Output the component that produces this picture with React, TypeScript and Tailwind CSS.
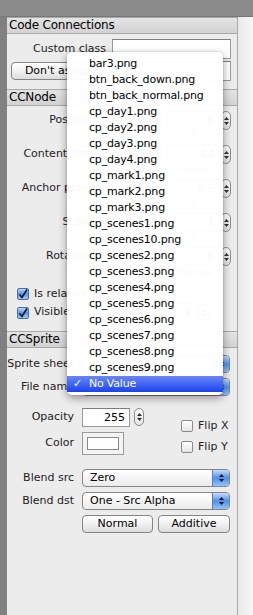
import React from "react";

const items = [
  "bar3.png",
  "btn_back_down.png",
  "btn_back_normal.png",
  "cp_day1.png",
  "cp_day2.png",
  "cp_day3.png",
  "cp_day4.png",
  "cp_mark1.png",
  "cp_mark2.png",
  "cp_mark3.png",
  "cp_scenes1.png",
  "cp_scenes10.png",
  "cp_scenes2.png",
  "cp_scenes3.png",
  "cp_scenes4.png",
  "cp_scenes5.png",
  "cp_scenes6.png",
  "cp_scenes7.png",
  "cp_scenes8.png",
  "cp_scenes9.png",
];

function Arrows({ color = "#333" }: { color?: string }) {
  return (
    <div className="flex flex-col items-center gap-[2px]">
      <svg width="5" height="3" viewBox="0 0 5 3">
        <path d="M2.5 0L5 3H0z" fill={color} />
      </svg>
      <svg width="5" height="3" viewBox="0 0 5 3">
        <path d="M0 0H5L2.5 3z" fill={color} />
      </svg>
    </div>
  );
}

function Stepper({ h = "h-[19px]" }: { h?: string }) {
  return (
    <div className={`w-[10px] ${h} rounded-[5px] border border-[#8e8e8e] bg-gradient-to-b from-white to-[#e2e2e2] flex items-center justify-center`}>
      <Arrows />
    </div>
  );
}

function Field({ w, value }: { w: string; value?: string }) {
  return (
    <div className={`${w} h-[19px] border border-[#9a9a9a] border-t-[#7d7d7d] bg-white text-right pr-[4px] text-[11px] leading-[17px]`}>
      {value}
    </div>
  );
}

function Header({ title }: { title: string }) {
  return (
    <div className="h-[17px] bg-gradient-to-b from-[#e4e4e4] to-[#d2d2d2] border-y border-[#a8a8a8] pl-[2px] text-[12px] leading-[15px] text-black tracking-[-0.2px]">
      {title}
    </div>
  );
}

function Popup({ text }: { text: string }) {
  return (
    <div className="w-[148px] h-[18px] rounded-[4px] border border-[#858585] bg-gradient-to-b from-white to-[#ebebeb] flex overflow-hidden">
      <span className="flex-1 pl-[7px] text-[11px] leading-[16px] text-black">{text}</span>
      <div className="w-[17px] border-l border-[#5b7fb6] bg-gradient-to-b from-[#c4dcfb] via-[#4d91ec] to-[#93c3f8] flex items-center justify-center">
        <Arrows color="#111" />
      </div>
    </div>
  );
}

function Button({ text, w }: { text: string; w: string }) {
  return (
    <div className={`${w} h-[18px] rounded-[4px] border border-[#858585] bg-gradient-to-b from-white via-[#f1f1f1] to-[#dcdcdc] text-center text-[11px] leading-[16px] text-black`}>
      {text}
    </div>
  );
}

function CheckBox({ checked }: { checked?: boolean }) {
  if (checked)
    return (
      <div className="w-[12px] h-[12px] rounded-[2px] border border-[#4a6ea8] bg-gradient-to-b from-[#b9d4fa] via-[#5495ec] to-[#a3cbf9] flex items-center justify-center">
        <svg width="10" height="10" viewBox="0 0 10 10">
          <path d="M1.5 5.5L4 8.5L9 0.5" stroke="#111" strokeWidth="1.6" fill="none" />
        </svg>
      </div>
    );
  return <div className="w-[12px] h-[12px] rounded-[2px] border border-[#8a8a8a] bg-gradient-to-b from-white to-[#e6e6e6]" />;
}

function NodeRow({ label, a, b, sa, sb }: { label: string; a: string; b: string; sa: string; sb: string }) {
  return (
    <div className="flex flex-col">
      <div className="flex items-center h-[19px]">
        <span className="w-[85px] text-right text-[11px] text-[#222]">{label}</span>
        <div className="ml-[6px] flex items-center gap-[2px]">
          <Field w="w-[52px]" value={a} />
          <Stepper />
        </div>
        <div className="ml-[5px] flex items-center gap-[2px]">
          <Field w="w-[52px]" value={b} />
          <Stepper />
        </div>
      </div>
      <div className="flex h-[14px] text-[9px] leading-[12px] text-[#444]">
        <span className="ml-[91px] w-[64px] text-center">{sa}</span>
        <span className="w-[64px] text-center">{sb}</span>
      </div>
    </div>
  );
}

export default function App() {
  return (
    <div className="w-[253px] h-[615px] flex flex-col bg-[#8b8b8b] font-['DejaVu_Sans',sans-serif] text-black relative overflow-hidden">
      <div className="h-[17px] bg-[#8b8b8b] border-b border-[#777]" />
      <div className="flex flex-1">
        <div className="w-[7px] bg-[#808080]" />
        <div className="w-[231px] bg-[#ececec] flex flex-col border-r border-[#a9a9a9]">
          <Header title="Code Connections" />
          <div className="mt-[5px] flex items-center h-[20px]">
            <span className="w-[99px] text-right text-[11px] text-[#222]">Custom class</span>
            <div className="ml-[6px] w-[119px] h-[20px] border border-[#9a9a9a] border-t-[#7d7d7d] bg-white" />
          </div>
          <div className="mt-[2px] flex items-center h-[20px]">
            <div className="ml-[4px]">
              <Button text="Don't assign" w="w-[96px]" />
            </div>
            <div className="ml-[5px] w-[119px] h-[20px] border border-[#9a9a9a] border-t-[#7d7d7d] bg-white" />
          </div>
          <div className="mt-[8px]">
            <Header title="CCNode" />
          </div>
          <div className="mt-[5px] flex flex-col gap-[1px]">
            <NodeRow label="Position" a="0" b="0" sa="X" sb="Y" />
            <NodeRow label="Content size" a="64" b="64" sa="Width" sb="Height" />
            <NodeRow label="Anchor point" a="0.5" b="0.5" sa="X" sb="Y" />
            <NodeRow label="Scale" a="1" b="1" sa="X" sb="Y" />
            <div className="flex flex-col">
              <div className="flex items-center h-[19px]">
                <span className="w-[85px] text-right text-[11px] text-[#222]">Rotation</span>
                <div className="ml-[75px] flex items-center gap-[2px]">
                  <Field w="w-[52px]" value="0" />
                  <Stepper />
                </div>
              </div>
              <div className="h-[14px] text-[9px] leading-[12px] text-[#444] ml-[155px] w-[64px] text-center">degrees</div>
            </div>
          </div>
          <div className="mt-[8px] flex items-center gap-[5px] pl-[10px] h-[12px]">
            <CheckBox checked />
            <span className="text-[11px] text-[#222]">Is relative anchor point</span>
          </div>
          <div className="mt-[4px] flex items-center h-[17px]">
            <div className="pl-[10px] flex items-center gap-[5px]">
              <CheckBox checked />
              <span className="text-[11px] text-[#222]">Visible</span>
            </div>
            <span className="ml-[50px] text-[11px] text-[#222]">Tag</span>
            <div className="ml-[6px] flex items-center gap-[2px]">
              <Field w="w-[52px]" value="-1" />
              <Stepper h="h-[17px]" />
            </div>
          </div>
          <div className="mt-[10px]">
            <Header title="CCSprite" />
          </div>
          <div className="mt-[7px] flex items-center h-[18px]">
            <span className="w-[67px] text-right text-[11px] text-[#222] whitespace-nowrap">Sprite sheet</span>
            <div className="ml-[8px]">
              <Popup text="" />
            </div>
          </div>
          <div className="mt-[5px] flex items-center h-[18px]">
            <span className="w-[67px] text-right text-[11px] text-[#222]">File name</span>
            <div className="ml-[8px]">
              <Popup text="No Value" />
            </div>
          </div>
          <div className="mt-[12px] flex">
            <div className="flex flex-col gap-[6px]">
              <div className="flex items-center h-[18px]">
                <span className="w-[67px] text-right text-[11px] text-[#222]">Opacity</span>
                <div className="ml-[8px] flex items-center gap-[4px]">
                  <Field w="w-[48px]" value="255" />
                  <Stepper h="h-[18px]" />
                </div>
              </div>
              <div className="flex items-center h-[23px]">
                <span className="w-[67px] text-right text-[11px] text-[#222]">Color</span>
                <div className="ml-[8px] w-[42px] h-[23px] border border-[#9a9a9a] bg-[#f4f4f4] p-[4px]">
                  <div className="w-full h-full bg-white border border-[#8a8a8a]" />
                </div>
              </div>
            </div>
            <div className="ml-[37px] pt-[12px] flex flex-col gap-[9px]">
              <div className="flex items-center gap-[5px] h-[12px]">
                <CheckBox />
                <span className="text-[11px] text-[#222]">Flip X</span>
              </div>
              <div className="flex items-center gap-[5px] h-[12px]">
                <CheckBox />
                <span className="text-[11px] text-[#222]">Flip Y</span>
              </div>
            </div>
          </div>
          <div className="mt-[14px] flex items-center h-[18px]">
            <span className="w-[67px] text-right text-[11px] text-[#222]">Blend src</span>
            <div className="ml-[8px]">
              <Popup text="Zero" />
            </div>
          </div>
          <div className="mt-[5px] flex items-center h-[18px]">
            <span className="w-[67px] text-right text-[11px] text-[#222]">Blend dst</span>
            <div className="ml-[8px]">
              <Popup text="One - Src Alpha" />
            </div>
          </div>
          <div className="mt-[5px] flex gap-[5px] ml-[75px]">
            <Button text="Normal" w="w-[71px]" />
            <Button text="Additive" w="w-[72px]" />
          </div>
        </div>
        <div className="flex-1 bg-gradient-to-r from-[#e9e9e9] to-[#f7f7f7]" />
      </div>

      <div className="absolute left-[67px] top-[52px] w-[156px] pt-[4px] pb-[3px] bg-white/[0.97] rounded-[5px] shadow-[0_3px_9px_rgba(0,0,0,0.4),0_0_0_1px_rgba(0,0,0,0.06)]">
        {items.map((it) => (
          <div key={it} className="h-[16px] pl-[22px] text-[11px] leading-[16px] tracking-[-0.2px] text-black whitespace-nowrap">
            {it}
          </div>
        ))}
        <div className="h-[16px] flex bg-gradient-to-b from-[#6a85f6] to-[#1b40ef] text-white text-[11px] leading-[16px] tracking-[-0.2px]">
          <span className="w-[22px] pl-[6px]">✓</span>
          <span>No Value</span>
        </div>
      </div>
    </div>
  );
}
